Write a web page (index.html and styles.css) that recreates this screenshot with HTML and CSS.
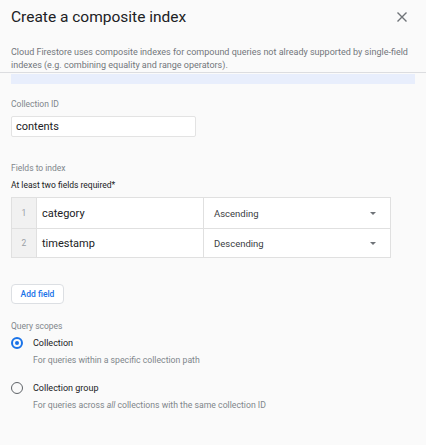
FILE: index.html
```html
<!DOCTYPE html>
<html>
<head>
<meta charset="utf-8">
<link rel="stylesheet" href="styles.css">
</head>
<body>
<div class="dialog">
  <header class="header">
    <div class="title-row">
      <h1 class="title">Create a composite index</h1>
      <svg class="close" width="12" height="12" viewBox="0 0 12 12"><path d="M1.5 1.5 L10.5 10.5 M10.5 1.5 L1.5 10.5" stroke="#6f7378" stroke-width="1.4" fill="none"/></svg>
    </div>
    <p class="desc">Cloud Firestore uses composite indexes for compound queries not already supported by single-field indexes (e.g. combining equality and range operators).</p>
  </header>
  <div class="band"></div>
  <div class="body">
    <div class="label lbl-coll">Collection ID</div>
    <div class="input">contents</div>
    <div class="label lbl-fields">Fields to index</div>
    <div class="hint">At least two fields required*</div>
    <div class="table">
      <div class="row">
        <div class="num">1</div>
        <div class="field">category</div>
        <div class="order"><span>Ascending</span><span class="caret"></span></div>
      </div>
      <div class="row">
        <div class="num">2</div>
        <div class="field">timestamp</div>
        <div class="order"><span>Descending</span><span class="caret"></span></div>
      </div>
    </div>
    <button class="add">Add field</button>
    <div class="label lbl-scope">Query scopes</div>
    <div class="radio-row first">
      <span class="radio checked"></span>
      <span class="radio-label">Collection</span>
    </div>
    <div class="radio-desc">For queries within a specific collection path</div>
    <div class="radio-row second">
      <span class="radio"></span>
      <span class="radio-label">Collection group</span>
    </div>
    <div class="radio-desc">For queries across <i>all</i> collections with the same collection ID</div>
  </div>
</div>
</body>
</html>
```
FILE: styles.css
```css
* { box-sizing: border-box; }
html, body { margin: 0; padding: 0; }
body {
  background: #fafafa;
  font-family: Roboto, "Liberation Sans", sans-serif;
  color: #202124;
  width: 426px;
  height: 445px;
  overflow: hidden;
}
.header {
  padding: 7px 18px 0 11px;
  border-bottom: 1px solid #dcdde0;
}
.title-row {
  display: flex;
  justify-content: space-between;
  align-items: center;
  height: 20px;
}
.title {
  margin: 0;
  font-size: 15.5px;
  font-weight: 400;
  line-height: 20px;
  color: #202124;
}
.desc {
  margin: 19px 0 0 0;
  font-size: 9px;
  line-height: 13px;
  color: #72767b;
  width: 400px;
}
.band {
  margin: 1px 11px 0 11px;
  height: 10px;
  background: #e8eefc;
}
.body {
  padding: 0 11px;
}
.label {
  font-size: 8.5px;
  line-height: 12px;
  color: #80868b;
}
.lbl-coll { margin-top: 14px; }
.input {
  margin-top: 6px;
  width: 185px;
  height: 21px;
  background: #fff;
  border: 1px solid #e3e3e3;
  border-radius: 2px;
  font-size: 11px;
  line-height: 19px;
  padding-left: 4px;
  color: #202124;
}
.lbl-fields { margin-top: 25px; }
.hint {
  margin-top: 5px;
  font-size: 8.5px;
  line-height: 12px;
  color: #202124;
}
.table {
  margin-top: 6px;
  width: 380px;
  border: 1px solid #e0e0e0;
  background: #fff;
}
.row {
  display: flex;
  height: 30px;
}
.row + .row { border-top: 1px solid #e0e0e0; height: 29px; }
.num {
  width: 25px;
  background: #f1f1f1;
  border-right: 1px solid #e0e0e0;
  font-size: 8.5px;
  color: #9aa0a6;
  display: flex;
  align-items: center;
  justify-content: center;
}
.field {
  width: 167px;
  border-right: 1px solid #e0e0e0;
  font-size: 11px;
  display: flex;
  align-items: center;
  padding-left: 5px;
  color: #202124;
}
.order {
  flex: 1;
  display: flex;
  align-items: center;
  justify-content: space-between;
  padding: 0 14px 0 10px;
  font-size: 9.5px;
  color: #3c4043;
}
.caret {
  width: 0;
  height: 0;
  border-left: 3px solid transparent;
  border-right: 3px solid transparent;
  border-top: 3px solid #6f7378;
}
.add {
  display: block;
  margin-top: 26px;
  width: 53px;
  height: 20px;
  background: #fff;
  border: 1px solid #dcdfe3;
  border-radius: 4px;
  font-family: Roboto, "Liberation Sans", sans-serif;
  font-size: 8.5px;
  font-weight: 500;
  color: #1a73e8;
  padding: 0;
}
.lbl-scope { margin-top: 16px; }
.radio-row {
  display: flex;
  align-items: center;
  height: 14px;
  gap: 10px;
}
.radio-row.first { margin-top: 4px; }
.radio-row.second { margin-top: 15px; }
.radio {
  width: 12px;
  height: 12px;
  border-radius: 50%;
  border: 1.5px solid #5f6368;
  position: relative;
}
.radio.checked {
  border: 2px solid #1a73e8;
}
.radio.checked::after {
  content: "";
  position: absolute;
  left: 2px;
  top: 2px;
  width: 4px;
  height: 4px;
  border-radius: 50%;
  background: #1a73e8;
}
.radio-label {
  font-size: 9px;
  color: #202124;
}
.radio-desc {
  margin-top: 4px;
  padding-left: 22px;
  font-size: 8.7px;
  line-height: 12px;
  color: #80868b;
}
```
